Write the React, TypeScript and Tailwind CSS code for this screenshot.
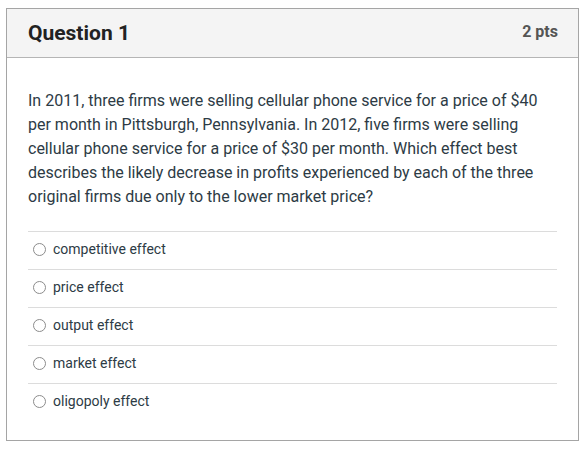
const options = ['competitive effect', 'price effect', 'output effect', 'market effect', 'oligopoly effect']

export default function App() {
  return (
    <div className="w-[587px] h-[454px] bg-white pt-2 pl-[6px]" style={{ fontFamily: 'Roboto, "Liberation Sans", sans-serif' }}>
      <div className="w-[573px] h-[433px] border border-[#a5a5a5] flex flex-col">
        {/* Header */}
        <div className="h-[49px] shrink-0 bg-[#f4f4f4] border-b border-[#b5b5b5] flex items-center justify-between pl-[21px] pr-[20px]">
          <h2 className="text-[21px] font-bold text-[#222] leading-none">Question 1</h2>
          <span className="text-[16px] font-bold text-[#555] leading-none -mt-[3px]">2 pts</span>
        </div>

        {/* Body */}
        <div className="px-[21px] pt-[31px]">
          <p className="text-[16px] leading-[24px] text-[#2d3b45]">
            In 2011, three firms were selling cellular phone service for a price of $40 per month in Pittsburgh, Pennsylvania. In 2012, five firms were selling cellular phone service for a price of $30 per month. Which effect best describes the likely decrease in profits experienced by each of the three original firms due only to the lower market price?
          </p>
          <div className="mt-[22px]">
            {options.map((o) => (
              <label key={o} className="flex items-center h-[38px] border-t border-[#dcdcdc] gap-[7px] pl-[5px] pb-[3px]">
                <span className="w-[13px] h-[13px] rounded-full border border-[#8c8c8c] bg-white shrink-0" />
                <span className="text-[14px] text-[#2d3b45]">{o}</span>
              </label>
            ))}
          </div>
        </div>
      </div>
    </div>
  )
}
